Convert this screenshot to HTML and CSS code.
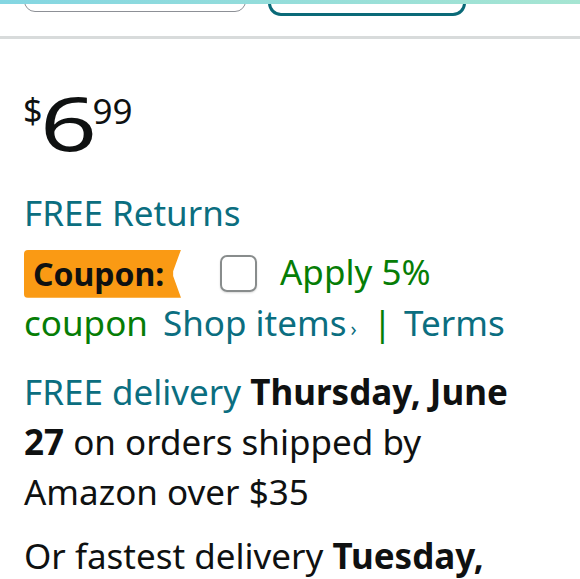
FILE: index.html
```html
<!DOCTYPE html>
<html>
<head>
<meta charset="utf-8">
<link rel="stylesheet" href="styles.css">
</head>
<body>
<div class="topbar"></div>
<div class="btnrow">
  <div class="btn btn-outline"></div>
  <div class="btn btn-primary"></div>
</div>
<div class="divider"></div>
<main class="content">
  <div class="price">
    <span class="cur">$</span><span class="whole">6</span><span class="frac">99</span>
  </div>
  <p class="returns">FREE Returns</p>
  <p class="coupon"><span class="badge">Coupon:</span><span class="check"></span><span class="green">Apply 5% coupon</span><span class="link shop">Shop items<span class="chev">›</span></span><span class="green bar">|</span><span class="link">Terms</span></p>
  <p class="delivery"><span class="link">FREE delivery</span> <b>Thursday, June 27</b> on orders shipped by Amazon over $35</p>
  <p class="delivery fast">Or fastest delivery <b>Tuesday,</b></p>
</main>
</body>
</html>
```
FILE: styles.css
```css
* { box-sizing: border-box; }
html, body { margin: 0; padding: 0; background: #fff; }
body {
  font-family: "Noto Sans", "Open Sans", sans-serif;
  color: #0f1111;
  width: 580px;
  overflow: hidden;
}
.topbar {
  height: 4px;
  background: linear-gradient(90deg, #84d6e2, #a6e5d2);
}
.btnrow {
  height: 12px;
  display: flex;
  gap: 22px;
  padding-left: 24px;
  overflow: hidden;
  align-items: flex-end;
}
.btn {
  flex: none;
  height: 40px;
  border-radius: 12px;
}
.btn-outline {
  width: 222px;
  margin-bottom: 4px;
  border: 1px solid #8d9096;
  border-radius: 11px;
}
.btn-primary {
  width: 198px;
  border: 3.5px solid #0a6a78;
  border-radius: 13px;
}
.divider {
  margin-top: 20px;
  height: 3px;
  background: #d8dbdb;
}
.content {
  padding: 0 50px 0 24px;
}
.price {
  display: flex;
  align-items: flex-start;
  margin-top: 49px;
  height: 70px;
}
.cur {
  font-size: 34px;
  line-height: 1;
  margin-top: 5px;
  margin-left: -1px;
}
.whole {
  display: inline-block;
  font-size: 75px;
  line-height: 1;
  margin-top: -3px;
  margin-left: -2px;
  width: 52px;
  transform: scaleX(1.33);
  transform-origin: left center;
}
.frac {
  font-size: 35px;
  line-height: 1;
  margin-top: 5px;
}
p { margin: 0; }
.returns {
  margin-top: 32px;
  font-size: 35px;
  line-height: 46px;
  color: #0b6e80;
}
.coupon {
  margin-top: 13px;
  font-size: 35px;
  line-height: 46px;
}
.badge {
  display: inline-block;
  vertical-align: middle;
  width: 157px;
  height: 48px;
  background: #fa9a14;
  border-radius: 4px 0 0 4px;
  clip-path: polygon(0 0, 100% 0, 95% 45%, 95% 55%, 100% 100%, 0 100%);
  font-weight: 700;
  font-size: 32px;
  line-height: 48px;
  padding-left: 9px;
  color: #0f1111;
  margin-right: 39px;
  position: relative;
  top: -2px;
}
.check {
  display: inline-block;
  vertical-align: middle;
  width: 37px;
  height: 37px;
  border: 2px solid #888c8c;
  border-radius: 7px;
  margin-right: 23px;
  box-shadow: 0 1px 2px rgba(0,0,0,0.15);
  position: relative;
  top: -2px;
}
.green { color: #067d06; }
.link { color: #0b6e80; }
.shop { margin-left: 15px; }
.chev { font-size: 20px; margin-left: 4px; }
.bar { margin: 0 12px 0 16px; }
.delivery {
  margin-top: 15px;
  font-size: 35px;
  line-height: 50px;
}
.delivery b { font-weight: 700; }
.fast { margin-top: 14px; }
```
